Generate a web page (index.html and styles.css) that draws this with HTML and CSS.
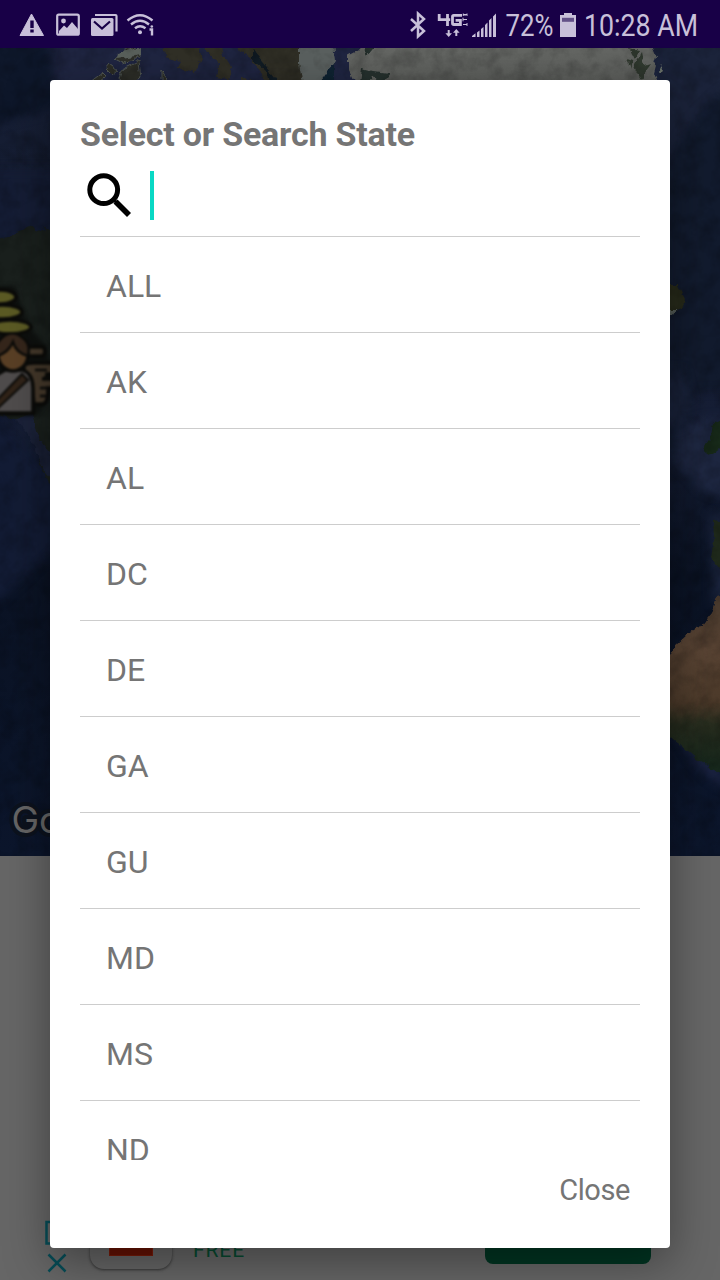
FILE: index.html
```html
<!DOCTYPE html>
<html lang="en">
<head>
<meta charset="utf-8">
<title>Select or Search State</title>
<link rel="stylesheet" href="styles.css">
</head>
<body>
<div class="screen">
  <header class="status">
    <svg class="status-left" width="140" height="48" viewBox="18 0 140 48">
      <path d="M31.500 14 43.500 35.500H20Z" fill="currentColor" stroke="currentColor" stroke-linejoin="round"/>
      <path d="M30.300 20.500h3.400v7.500h-3.400zM30.300 29.500h3.400v3h-3.400z" fill="#180047"/>
      <rect x="57.200" y="14.700" width="21.600" height="20" rx="1.500" fill="none" stroke="currentColor" stroke-width="2.200"/>
      <circle cx="63.500" cy="21" r="2.400" fill="currentColor"/>
      <path d="M59 31 64 25.500l3 2.500 5-6 6 7v5H59Z" fill="currentColor"/>
      <path d="M95 15h20.500q1 0 1 1v15.500" fill="none" stroke="currentColor" stroke-width="2.200"/>
      <rect x="91" y="18" width="22.500" height="18" rx="1.500" fill="currentColor"/>
      <path d="m94 21.500 8 7 8-7" fill="none" stroke="#180047" stroke-width="2.200"/>
      <g fill="none" stroke="currentColor" stroke-width="2.400">
        <path d="M127.500 20.500q12.500-10.500 25 0"/>
        <path d="M131 24.500q9-7.500 18 0"/>
        <path d="M135 28.300q5-4 10.500 0"/>
        <path d="M149.500 29.500h2.500v6"/>
      </g>
      <circle cx="140" cy="32.300" r="2" fill="currentColor"/>
      <circle cx="151.800" cy="26.500" r="1.300" fill="currentColor"/>
    </svg>
    <svg class="status-right" width="302" height="48" viewBox="408 0 302 48">
      <path d="m411 19 13 12-6 5.500V13.500l6 5.500-13 12" fill="none" stroke="currentColor" stroke-width="2.500"/>
      <g fill="none" stroke="currentColor" stroke-width="2.800">
        <path d="M439.200 14v5.700h11M447.500 14v12"/>
        <path d="M462 15.300h-8.200q-1.300 0-1.300 1.300v6.600q0 1.300 1.300 1.300h6.600v-4.200h-4.800"/>
      </g>
      <path d="M463 24.500h4M467 26v-3M463 19.500h4M463 17.700v3.600M463 14.500h4M463.300 16v-2.500M465 16v-2M467 16v-2.500" fill="none" stroke="currentColor" stroke-width="1"/>
      <path d="M447.700 30h2v3.200h2.300l-3.300 3.800-3.300-3.800h2.300zM455.300 36v-3.200H453l3.300-3.800 3.300 3.800h-2.300V36z" fill="currentColor"/>
      <path d="M472 37v-1l3.500-2.700V37zM477 32.500l2.500-2V37H477zM481 29l2.500-2V37H481zM485 25l2.500-2.500V37H485zM489 20.500l2.500-2.500V37H489zM493 16.500l3-3V37h-3z" fill="currentColor"/>
      <text x="505.500" y="36" textLength="48" lengthAdjust="spacingAndGlyphs" class="status-text">72%</text>
      <path d="M564 13h8v2h4v22h-16V15h4z" fill="currentColor"/>
      <path d="M562 17.800h12v4h-12z" fill="#625087"/>
      <text x="584" y="36" textLength="114" lengthAdjust="spacingAndGlyphs" class="status-text">10:28 AM</text>
    </svg>
  </header>

  <svg class="map" width="720" height="808" viewBox="0 48 720 808" color-interpolation-filters="sRGB">
    <defs>
      <linearGradient id="sea" x1="0" y1="0" x2="0" y2="1">
        <stop offset="0" stop-color="#1a223b"/><stop offset=".2" stop-color="#131b2e"/>
        <stop offset=".45" stop-color="#161e35"/><stop offset=".65" stop-color="#0b1324"/>
        <stop offset="1" stop-color="#0c162c"/>
      </linearGradient>
      <linearGradient id="ice" x1="0" y1="0" x2="0" y2="1">
        <stop offset="0" stop-color="#666865"/><stop offset="1" stop-color="#595b58"/>
      </linearGradient>
      <linearGradient id="africa" x1="0" y1="600" x2="0" y2="772" gradientUnits="userSpaceOnUse">
        <stop offset="0" stop-color="#48392d"/><stop offset=".3" stop-color="#584333"/>
        <stop offset=".6" stop-color="#4c3a2a"/><stop offset=".72" stop-color="#272c1e"/>
        <stop offset="1" stop-color="#15271c"/>
      </linearGradient>
      <filter id="coast" filterUnits="userSpaceOnUse" x="-20" y="28" width="760" height="848">
        <feTurbulence type="fractalNoise" baseFrequency=".12" numOctaves="3" seed="4" result="n"/>
        <feDisplacementMap in="SourceGraphic" in2="n" scale="7" xChannelSelector="R" yChannelSelector="G"/>
        <feGaussianBlur stdDeviation=".4"/>
      </filter>
      <filter id="relief" x="0" y="0" width="100%" height="100%">
        <feTurbulence type="fractalNoise" baseFrequency=".06" numOctaves="4" seed="9"/>
        <feColorMatrix values="0 0 0 0 0  0 0 0 0 0  0 0 0 0 0  1.6 0 0 0 -.62"/>
      </filter>
      <filter id="soft" filterUnits="userSpaceOnUse" x="-20" y="28" width="760" height="848"><feGaussianBlur stdDeviation="5"/></filter>
      <filter id="smooth" x="-30%" y="-20%" width="160%" height="140%"><feGaussianBlur stdDeviation=".8"/></filter>
      <filter id="halo" x="-30%" y="-20%" width="160%" height="140%"><feGaussianBlur stdDeviation="2"/></filter>
    </defs>
    <rect y="48" width="720" height="808" fill="url(#sea)"/>
    <path d="M48 30H660v60H52z" fill="#1f2541" filter="url(#soft)"/>
    <path d="M-20 28h66l12 80-78 20z" fill="#0e172a" filter="url(#soft)"/>
    <path d="M655 30h85v72q-50 17-64 63l-21 4z" fill="#1b233a" filter="url(#soft)"/>
    <path d="M740 90v300h-45l-12 58-18 12V170q20-50 60-80z" fill="#121b2e" filter="url(#soft)"/>
    <path d="M677 432q25-22 63-10v75q-41 0-47-19l-18-14z" fill="#1e2741" filter="url(#soft)"/>
    <path d="M665 370h18l8 32-8 24-18 2zM710 514h30v90h-27z" fill="#1a233b" filter="url(#soft)"/>
    <path d="M665 680q20 55 60 96v12q-45-25-60-95z" fill="#1c2442" filter="url(#soft)"/>
    <path d="M-20 170h80v60l-26 6-54 10z" fill="#151d35" filter="url(#soft)"/>
    <path d="M-20 400 60 484v60L0 600h-20z" fill="#131c35" filter="url(#soft)"/>

    <g filter="url(#coast)">
      <path d="m126 43 14 8v6l-18 7-8-4 11-10zM121 70l18-9 2 17-9 10-14-8zM109 63l9 7-6 5-7-7zM161 70l6 10 2 9-8-9zM103 73l4 4-16 10-8 1z" fill="#2d2e28" stroke="#515752" stroke-width="1"/>
      <path d="M118 53 141 47v8l-24 4z" fill="#59605b"/>
      <path d="M164 40h33l4 19-6 14-17-4 4-7-17-5zM203 40h18l3 16 8 12-4 12-12-2 2-14-13-14zM236 40h67v52h-37l-5-17-8-15-13-9zM243 78l9 1 4 11h-13z" fill="#302f26"/>
      <path d="m252 48 14 18 10 12 8 12h-14l-3-18-15-14z" fill="#111c25"/>
      <path d="m299 44 34-2 2 20-17 23-14 5-5-27z" fill="#5a605f"/>
      <path d="m334 64-10 13-10 12h20z" fill="#0f2332"/>
      <path d="M348 56 378 40h272l7 17-4 15 8 21H360l-12-24z" fill="url(#ice)"/>
      <path d="M360 44h17l-10 12zM362 68l12 3 15 2-8 10-10-7-3 12-8-4z" fill="#25302d"/>
      <path d="m629 48 10 2-4 9zM627 60l6 2-2 6zM642 52l3 14 6-2-11 15-6-13z" fill="#30392f"/>
      <path d="m662 65 2 3-1 6-4-2z" fill="#6a7269"/>
      <path d="m-5 241 27-10 12-6 3 6 9-4 14 8v270L40 464l-8-28-14-16-23-6z" fill="#1a201d"/>
      <path d="M13 420q15 8 18 20l10 24q6 12 12 17l1-22-16-22-5-24z" fill="#1b2239"/>
      <path d="M665 285h14l7 14-5 10-14 6z" fill="#272a1a"/>
      <path d="M668 310h8l-4 6h-6z" fill="#59615c"/>
      <path d="m725 417-12 8-2 12-7 10 2 8 11-3 8-6z" fill="#182a1a"/>
      <path d="m735 517-22 4 1 19-3 19 8 10 16 2z" fill="#1f291b"/>
      <path d="m735 590-19 6-5 17-11 14-9 5-18 17-13 22v57l39 33 36 19z" fill="url(#africa)"/>
    </g>
    <rect y="48" width="720" height="808" filter="url(#relief)" opacity=".25"/>

    <path d="M0 290h12l12 38 18 20 7 24-4 26-12 14H0z" fill="#090a09" stroke="#090a09" stroke-width="8" stroke-linejoin="round" opacity=".65" filter="url(#halo)"/>
    <g filter="url(#smooth)" stroke="#0b0b09" stroke-width="3.500">
      <ellipse cx="1" cy="297" rx="15" ry="7" fill="#5b5a24"/>
      <ellipse cx="3" cy="312" rx="19" ry="7" fill="#5b5a24"/>
      <ellipse cx="10" cy="327" rx="21" ry="7" fill="#5b5a24"/>
      <path d="M26 347h17q4 4 0 9H26z" fill="#44382a"/>
      <path d="M24 365q4-2 9-2h24v11H47q0 5-5 5h12v9h-6q0 15-5 16H34l-2-20-8-8z" fill="#44382a"/>
      <path d="M35 370h12M40 388h7M40 396h6" fill="none" stroke-width="2.500"/>
      <path d="M-5 376 5 370h18q10 4 10 18v25H-5z" fill="#4f4c4c"/>
      <path d="m-5 402 27-28 6 6-31 29z" fill="#302318" stroke-width="2"/>
      <ellipse cx="13" cy="355" rx="15" ry="16" fill="#593f25"/>
      <path d="M-4 345q12-19 27-7 8 6 5 18-12-3-15-14-5 11-16 14z" fill="#35261b" stroke-width="2.500"/>
    </g>
    <text x="11.500" y="833" class="map-logo">Google</text>
  </svg>

  <section class="ad">
    <div class="ad-controls">
      <svg width="22" height="56" viewBox="45 1218 22 56" fill="none" stroke="#064d57" stroke-width="2.500">
        <path d="M64 1222H46.500v21.500H64zM48.500 1254.500l17 17m0-17-17 17"/>
      </svg>
    </div>
    <div class="ad-icon"><div class="ad-art"></div></div>
    <div class="ad-price">FREE</div>
    <div class="ad-button"></div>
  </section>

  <div class="dialog">
    <h1 class="title">Select or Search State</h1>
    <div class="search">
      <svg class="search-icon" width="46" height="46" viewBox="86 172 46 46" fill="none" stroke="#000">
        <circle cx="103.700" cy="189.700" r="13.900" stroke-width="5"/>
        <path d="m113.500 199.500 3 3" stroke-width="3"/>
        <path d="m115.500 201.500 13.500 13.500" stroke-width="5.600"/>
      </svg>
      <span class="caret"></span>
    </div>
    <ul class="states">
      <li>ALL</li><li>AK</li><li>AL</li><li>DC</li><li>DE</li>
      <li>GA</li><li>GU</li><li>MD</li><li>MS</li><li>ND</li>
    </ul>
    <div class="actions"><button class="close">Close</button></div>
  </div>
</div>
</body>
</html>
```

FILE: styles.css
```css
* { box-sizing: border-box; }
body {
  margin: 0;
  font-family: Roboto, "Liberation Sans", sans-serif;
  color: #757575;
}
.screen {
  position: relative;
  display: flex;
  flex-direction: column;
  width: 720px;
  height: 1280px;
  overflow: hidden;
  background: #666;
}
.status {
  display: flex;
  justify-content: space-between;
  flex: none;
  height: 48px;
  padding: 0 10px 0 18px;
  background: #180047;
  color: #c8c0d9;
}
.status-text { font-size: 31px; fill: currentColor; }
.map { display: block; flex: none; }
.map-logo {
  font: 37px Inter, sans-serif;
  fill: #656565;
  stroke: #0c121d;
  stroke-width: 8px;
  stroke-linejoin: round;
  paint-order: stroke;
}
.ad {
  display: flex;
  align-items: flex-end;
  flex: 1;
  padding: 0 69px 6px 45px;
}
.ad-controls { display: flex; width: 45px; }
.ad-icon {
  display: flex;
  justify-content: center;
  align-items: flex-end;
  width: 82px;
  height: 82px;
  margin-bottom: 5px;
  padding-bottom: 13px;
  border-radius: 14px;
  background: #666;
  box-shadow: 0 1px 3px #333;
}
.ad-art { width: 44px; height: 44px; background: #661203; border: 1px solid #7a1b09; }
.ad-price {
  margin: 0 0 12px 21px;
  font-size: 21px;
  line-height: 24px;
  letter-spacing: .9px;
  color: #064a30;
}
.ad-button {
  width: 166px;
  height: 60px;
  margin: 0 0 10px auto;
  border-radius: 8px;
  background: #003522;
}
.dialog {
  position: absolute;
  left: 50px;
  top: 80px;
  display: flex;
  flex-direction: column;
  width: 620px;
  height: 1168px;
  padding: 30px;
  border-radius: 4px;
  background: #fff;
  box-shadow: 0 14px 46px rgba(0, 0, 0, .38);
}
.title {
  margin: 0;
  font-size: 34px;
  font-weight: 700;
  line-height: 48px;
  letter-spacing: -.22px;
  white-space: nowrap;
}
.search {
  display: flex;
  flex: none;
  gap: 18px;
  height: 78px;
  padding: 13px 6px 0;
}
.search-icon { margin-top: 1px; }
.caret { width: 4px; height: 49px; background: #09d8c4; }
.states {
  flex: 1;
  min-height: 0;
  margin: 0;
  padding: 0;
  overflow: hidden;
  list-style: none;
}
.states li {
  height: 96px;
  padding-left: 26px;
  border-top: 1px solid #cdcdcd;
  font-size: 32px;
  line-height: 98px;
}
.actions { display: flex; justify-content: flex-end; flex: none; height: 58px; padding-right: 10px; }
.close {
  padding: 0;
  border: 0;
  background: none;
  color: inherit;
  font: 29px/61px Roboto, sans-serif;
  letter-spacing: -.4px;
}
```
